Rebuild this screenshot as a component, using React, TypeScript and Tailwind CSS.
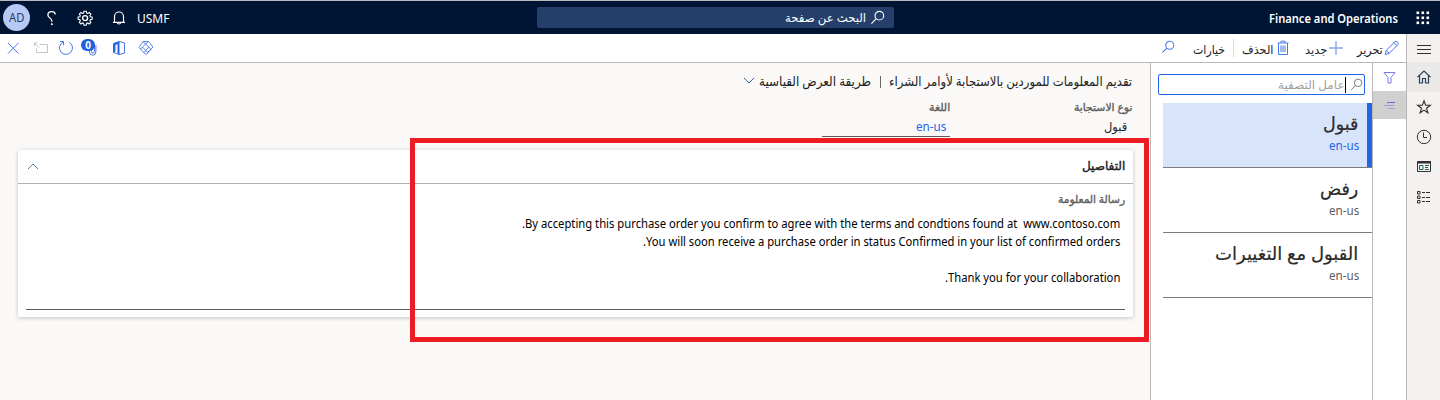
import { useLayoutEffect, useRef, useState, type ReactNode } from 'react';

type FitProps = { w: number; className?: string; ltr?: boolean; children: ReactNode };

/** Single line of text, horizontally fitted to the given width. */
function Fit({ w, className = '', ltr = false, children }: FitProps) {
  const ref = useRef<HTMLSpanElement>(null);
  const [scale, setScale] = useState(1);
  useLayoutEffect(() => {
    if (ref.current) setScale(w / ref.current.offsetWidth);
  }, [w]);
  return (
    <div dir="ltr" className={`shrink-0 whitespace-pre ${className}`} style={{ width: w }}>
      <span
        ref={ref}
        dir={ltr ? 'ltr' : 'rtl'}
        className="inline-block origin-left"
        style={{ transform: `scaleX(${scale})` }}
      >
        {children}
      </span>
    </div>
  );
}

type IconProps = { className?: string; children: ReactNode; box?: string };
function Icon({ className = '', children, box = '0 0 16 16' }: IconProps) {
  return (
    <svg viewBox={box} fill="none" stroke="currentColor" strokeWidth="1" className={`block shrink-0 ${className}`}>
      {children}
    </svg>
  );
}

function SearchIcon({ className = '' }: { className?: string }) {
  return (
    <Icon className={className}>
      <circle cx="10" cy="6" r="4.6" strokeWidth="1.2" />
      <path d="M6.7 9.3 1.5 14.5" strokeWidth="1.2" />
    </Icon>
  );
}

function Header() {
  return (
    <header className="flex h-[34px] items-start border-t border-[#b9bbc0] bg-[#001433] text-white">
      <div className="ml-[3px] mt-[3px] flex size-[27px] items-center justify-center rounded-full bg-[#b7c9f5] text-[#2b3a5c]">
        <Fit w={15} ltr className="text-[12px] leading-[26px]">AD</Fit>
      </div>
      <Icon className="ml-[13px] mt-[9px] size-4">
        <path d="M12.400 4.400C12.100 2.600 10.700 1.600 8.700 1.600 6.500 1.600 4.900 2.900 4.900 4.900c0 2.800 4 3.200 4 6.300v.5" strokeWidth="1.300" />
        <circle cx="8.900" cy="14.200" r=".6" fill="currentColor" />
      </Icon>
      <Icon className="ml-[18px] mt-[9px] size-4">
        <path
          d="M6.7 1.2h2.6l.4 2 1.3.5 1.6-1.1 1.8 1.8-1.1 1.7.5 1.2 2 .4v2.6l-2 .4-.5 1.2 1.1 1.7-1.8 1.8-1.6-1.1-1.3.5-.4 2H6.7l-.4-2-1.3-.5-1.6 1.1-1.8-1.8 1.1-1.7-.5-1.2-2-.4V7.7l2-.4.5-1.2-1.1-1.7 1.8-1.8L5 3.7l1.3-.5z"
          transform="translate(.9 .1) scale(.9)"
          strokeWidth="1.2"
        />
        <circle cx="8.100" cy="8.100" r="2.500" strokeWidth="1.400" />
      </Icon>
      <Icon className="ml-[18px] mt-[9px] size-4">
        <path d="M3.500 12V6.500a4.500 4.500 0 0 1 9 0V12M2 12.300h12" strokeWidth="1.200" />
        <path d="M6.300 12.500c.2 2 3.200 2 3.400 0" strokeWidth="1.200" />
      </Icon>
      <Fit w={32} ltr className="ml-[10px] mt-[8px] text-[12px] leading-5">USMF</Fit>
      <div className="ml-[368px] mt-[6px] flex h-[21px] w-[357px] items-center rounded-[2px] bg-[#263f6a]">
        <Fit w={81} className="ml-[248px] text-[12px] leading-5">البحث عن صفحة</Fit>
        <SearchIcon className="ml-[4px] size-[15px]" />
      </div>
      <Fit w={129} ltr className="ml-[375px] mt-[8px] text-[12px] font-semibold leading-5">Finance and Operations</Fit>
      <svg viewBox="0 0 14 14" className="ml-[18px] mt-[10px] size-[14px] shrink-0" fill="currentColor">
        {[0, 5, 10].map((y) => [0, 5, 10].map((x) => <rect key={`${x}-${y}`} x={x + 0.5} y={y + 0.5} width="2.6" height="2.6" />))}
      </svg>
    </header>
  );
}

function Toolbar() {
  return (
    <div className="flex h-[29px] items-start border-b border-[#bab8b7] bg-white text-[#4a78e4]">
      <Icon className="ml-[6px] mt-[7px] size-[14px]" box="0 0 14 14">
        <path d="M2 2 12.500 12.500M12.500 2 2 12.500" />
      </Icon>
      <Icon className="ml-[13px] mt-[6px] size-4 text-[#c6c4c2]">
        <path d="M6.500 4.500H14.500v8H3.500V8.500M1.500 3 6 7.500M1.500 6V3h3" />
      </Icon>
      <Icon className="ml-[9px] mt-[6px] size-4">
        <path d="M5 2.100A6.500 6.500 0 1 0 11.300 2.300M1.800 1.500h3.700v3.700" />
      </Icon>
      <Icon className="ml-[6px] mt-[4px] h-[18px] w-[18px]" box="0 0 18 18">
        <path d="M11.500 8v5.500a1.500 1.500 0 0 0 3 0V7M9.500 9v5a3.200 3.200 0 0 0 6.400 0V7" />
        <rect x="1" y="1" width="14" height="12" rx="6" fill="#1f5fe0" stroke="none" />
        <text x="8" y="10.500" textAnchor="middle" fontSize="10" fontWeight="700" fill="#fff" stroke="none">0</text>
      </Icon>
      <Icon className="ml-[13px] mt-[6px] size-4">
        <path d="M8.500 1.500 13.500 3v10l-5 1.500L2.500 12.500v-9z" />
        <path d="M8.500 1v14l-2-1.500V4L4.500 5v6.500l-2 1.200V3.500z" fill="#2266e3" stroke="none" />
      </Icon>
      <Icon className="ml-[11px] mt-[6px] size-4">
        <path d="M5 1.500h5.500l4.500 5.500-6.500 7.300H7.500L1 7.500zM5 1.500l5.800 5.500-3 3.500-3.400-3.500L10.500 1.500M4.400 7 2.700 9.300M10.800 7l2 2.300-2.600 2.700M7.800 10.500l2.400 2.200M7.800 10.500l-2.400 2.200" strokeWidth=".9" />
      </Icon>
      <SearchIcon className="ml-[1007px] mt-[6px] size-[14px]" />
      <Fit w={32} className="ml-[18px] mt-[6px] text-[12px] leading-5 text-[#222]">خيارات</Fit>
      <div className="ml-[8px] mt-[5px] h-[18px] w-px bg-[#dcdad8]" />
      <Fit w={31} className="ml-[8px] mt-[6px] text-[12px] leading-5 text-[#222]">الحذف</Fit>
      <Icon className="ml-[2px] mt-[6px] size-4">
        <path d="M2.500 3h11M6 3V1.200h4V3M3.500 3v11.500h9V3M6 5.500v6.500M8 5.500v6.500M10 5.500v6.500" />
      </Icon>
      <Fit w={22} className="ml-[14px] mt-[6px] text-[12px] leading-5 text-[#222]">جديد</Fit>
      <Icon className="ml-[2px] mt-[7px] size-[14px]" box="0 0 14 14">
        <path d="M7 0v14M0 7h14" strokeWidth="1.400" opacity=".65" />
      </Icon>
      <Fit w={26} className="ml-[14px] mt-[6px] text-[12px] leading-5 text-[#222]">تحرير</Fit>
      <Icon className="ml-[1px] mt-[6px] size-4">
        <path d="m1.200 14.600 1-4.200L11 1.600c1.500-1 3.900 1.200 3 2.900L5.200 13.400zM10 2.800l3 3M2.200 10.400l3 3" />
      </Icon>
    </div>
  );
}

function Details() {
  return (
    <main className="relative h-[337px] w-[1150px] shrink-0 bg-[#faf9f8] text-[12px] text-[#222]">
      <div className="flex h-[34px] items-start pt-[8px]">
        <Icon className="ml-[743px] mt-[5px] h-[9px] w-[12px] text-[#3f5f9f]" box="0 0 12 9">
          <path d="m1 2 5 5 5-5" />
        </Icon>
        <Fit w={112} className="ml-[4px] text-[13px] leading-5">طريقة العرض القياسية</Fit>
        <div className="ml-[9px] mt-[5px] h-[12px] w-px bg-[#666]" />
        <Fit w={243} className="ml-[8px] text-[13px] leading-5">تقديم المعلومات للموردين بالاستجابة لأوامر الشراء</Fit>
      </div>
      <div className="flex h-[40px]">
        <div className="ml-[822px] flex w-[128px] flex-col items-end border-b border-[#5c5a58]">
          <Fit w={21} className="text-[11px] leading-5 text-[#605e5c] [-webkit-text-stroke:0.35px]">اللغة</Fit>
          <Fit w={30} ltr className="mr-[4px] text-[12px] leading-5 text-[#2266e3]">en-us</Fit>
        </div>
        <div className="ml-[54px] flex w-[128px] flex-col items-end">
          <Fit w={58} className="text-[11px] leading-5 text-[#605e5c] [-webkit-text-stroke:0.35px]">نوع الاستجابة</Fit>
          <Fit w={23} className="mr-[5px] text-[12px] leading-5">قبول</Fit>
        </div>
      </div>
      <section className="ml-[18px] mt-[13px] h-[167px] w-[1115px] rounded-[2px] bg-white shadow-[0_1px_4px_rgba(0,0,0,0.22)]">
        <div className="flex h-[34px] items-start justify-between border-b border-[#b3b1af]">
          <Icon className="ml-[9px] mt-[12px] h-[9px] w-[12px] text-[#5c7fa5]" box="0 0 12 9">
            <path d="m1 7 5-5 5 5" />
          </Icon>
          <Fit w={43} className="mr-[8px] mt-[6px] text-[12px] leading-5 [-webkit-text-stroke:0.4px]">التفاصيل</Fit>
        </div>
        <div className="ml-2 mr-2 flex h-[126px] flex-col items-end border-b border-[#5c5a58] pt-[5px]">
          <Fit w={67} className="text-[11px] leading-5 text-[#605e5c] [-webkit-text-stroke:0.35px]">رسالة المعلومة</Fit>
          <div className="mr-[5px] mt-[6px] flex flex-col items-end leading-[18px] text-black">
            <Fit w={598}>By accepting this purchase order you confirm to agree with the terms and condtions found at  www.contoso.com.</Fit>
            <Fit w={477}>You will soon receive a purchase order in status Confirmed in your list of confirmed orders.</Fit>
            <div className="h-[18px]" />
            <Fit w={175}>Thank you for your collaboration.</Fit>
          </div>
        </div>
      </section>
      <div className="absolute left-[410px] top-[75px] h-[204px] w-[739px] border-5 border-[#ed1c24]" />
    </main>
  );
}

const rows = [
  { name: 'قبول', w: 35, selected: true },
  { name: 'رفض', w: 38, selected: false },
  { name: 'القبول مع التغييرات', w: 143, selected: false },
];

function ListPanel() {
  return (
    <aside className="h-[337px] w-[223px] shrink-0 border-x border-[#b9b7b5] bg-white">
      <div className="ml-[7px] mt-[11px] flex h-[21px] w-[207px] items-center rounded-[2px] border border-[#2266e3]">
        <Fit w={67} className="ml-[119px] pt-px text-[12px] leading-5 text-[#a19f9d]">عامل التصفية</Fit>
        <div className="h-[16px] w-px bg-black" />
        <SearchIcon className="ml-[4px] size-[13px] text-[#777]" />
      </div>
      <div className="ml-[12px] mt-[8px]">
        {rows.map((r) => (
          <div
            key={r.name}
            className={`flex h-[65px] w-[209px] flex-col items-end border-b border-[#7d7b7a] pr-[13px] pt-[7px] ${
              r.selected ? 'bg-[#d8e4fc] shadow-[inset_-5px_0_0_#2266e3]' : 'bg-white'
            }`}
          >
            <Fit w={r.w} className="mr-px text-[18px] leading-[26px] text-[#2a2a2a] [-webkit-text-stroke:0.2px]">{r.name}</Fit>
            <Fit w={30} ltr className={`mt-px text-[12px] leading-[18px] ${r.selected ? 'text-[#2266e3]' : 'text-[#605e5c]'}`}>en-us</Fit>
          </div>
        ))}
      </div>
    </aside>
  );
}

function FilterStrip() {
  return (
    <div className="w-[33px] shrink-0 bg-white">
      <div className="flex h-[28px] items-center justify-center text-[#7b7be8]">
        <Icon className="size-[13px]" box="0 0 13 13">
          <path d="M1 1.500h11L8 6.500v5.500H5v-5.500z" />
        </Icon>
      </div>
      <div className="flex h-[28px] items-center justify-center bg-[#d2d0ce]">
        <Icon className="size-[13px] text-[#5f74dc]" box="0 0 13 13">
          <path d="M4 3.500h8" strokeWidth="1.100" />
          <path d="M1 6.500h10M5 9.500h7" stroke="#9a9fe0" />
        </Icon>
      </div>
    </div>
  );
}

function NavRail() {
  return (
    <nav className="flex h-[366px] w-[34px] shrink-0 flex-col items-center border-l border-[#b9b7b5] bg-[#f3f2f1] text-[#33302e]">
      <div className="flex h-[28px] items-center">
        <Icon className="mt-[3px] h-[12px] w-[14px]" box="0 0 14 12">
          <path d="M0 1.500h14M0 5.500h14M0 9.500h14" strokeWidth="1.100" />
        </Icon>
      </div>
      <div className="flex h-[30px] w-full items-center justify-center bg-[#eae9e8]">
        <Icon className="size-4 text-[#243b55]">
          <path d="M1.500 8.200 8 2l6.500 6.200M3.500 6.500v7.500h3V9.500h3V14h3V6.500" strokeWidth="1.150" />
        </Icon>
      </div>
      <div className="flex h-[30px] items-center">
        <Icon className="size-4">
          <path d="m8 1.800 1.600 4.500h4.700l-3.800 2.900 1.400 4.600L8 11.100l-3.900 2.700 1.400-4.600-3.800-2.900h4.700z" strokeWidth="1.100" />
        </Icon>
      </div>
      <div className="flex h-[30px] items-center">
        <Icon className="size-4">
          <circle cx="8" cy="8" r="6.700" />
          <path d="M7.500 3.500v5H11" />
        </Icon>
      </div>
      <div className="flex h-[30px] items-center">
        <Icon className="size-4">
          <path d="M1.500 2.500h13v10h-13z" />
          <path d="M1 3.500h14" strokeWidth="2" />
          <path d="M3.500 6.500h3.500v4H3.500zM9 6.500h4M9 8.500h3M9 10.500h4" stroke="#285f6d" />
        </Icon>
      </div>
      <div className="flex h-[30px] items-center">
        <Icon className="size-4">
          <path d="M1.500 2.500H4V5H1.500zM1.500 7H4v2.500H1.500zM1.500 11.500H4V14H1.500zM6 3.500h3m1 0h4M6 8.500h3m1 0h4M6 12.500h3m1 0h4" />
        </Icon>
      </div>
    </nav>
  );
}

export default function App() {
  return (
    <div className="h-[400px] w-[1440px] overflow-hidden bg-white font-['Noto_Sans','DejaVu_Sans',sans-serif]">
      <Header />
      <div className="flex">
        <div className="w-[1406px] shrink-0">
          <Toolbar />
          <div className="flex">
            <Details />
            <ListPanel />
            <FilterStrip />
          </div>
        </div>
        <NavRail />
      </div>
    </div>
  );
}
